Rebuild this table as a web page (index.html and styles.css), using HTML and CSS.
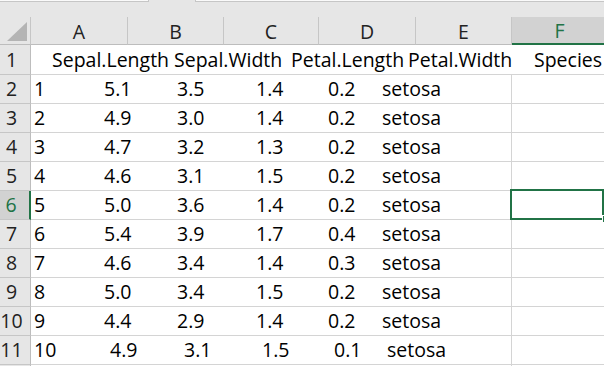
FILE: index.html
```html
<!DOCTYPE html>
<html>
<head>
<meta charset="utf-8">
<link rel="stylesheet" href="styles.css">
</head>
<body>
<div class="sheet">
  <div class="topbar"><div class="tb-left"></div><div class="tb-gap"></div><div class="tb-right"></div></div>
  <div class="colhead">
    <div class="corner"><svg width="30" height="27" viewBox="0 0 30 27"><polygon points="27,5 27,24 7,24" fill="#b4b4b4"/></svg></div>
    <div class="ch ca">A</div>
    <div class="ch cb">B</div>
    <div class="ch cc">C</div>
    <div class="ch cd">D</div>
    <div class="ch ce">E</div>
    <div class="ch cf selcol">F</div>
  </div>

  <div class="row first">
    <div class="rh">1</div>
    <div class="span hdr"><span class="h1">Sepal.Length</span><span class="h2">Sepal.Width</span><span class="h3">Petal.Length</span><span>Petal.Width</span></div>
    <div class="fc nob"><span class="spec">Species</span></div>
  </div>

  <div class="row"><div class="rh">2</div><div class="span"><span class="i">1</span><span class="v1">5.1</span><span class="v2">3.5</span><span class="v3">1.4</span><span class="v4">0.2</span><span>setosa</span></div><div class="fc"></div></div>
  <div class="row"><div class="rh">3</div><div class="span"><span class="i">2</span><span class="v1">4.9</span><span class="v2">3.0</span><span class="v3">1.4</span><span class="v4">0.2</span><span>setosa</span></div><div class="fc"></div></div>
  <div class="row"><div class="rh">4</div><div class="span"><span class="i">3</span><span class="v1">4.7</span><span class="v2">3.2</span><span class="v3">1.3</span><span class="v4">0.2</span><span>setosa</span></div><div class="fc"></div></div>
  <div class="row"><div class="rh">5</div><div class="span"><span class="i">4</span><span class="v1">4.6</span><span class="v2">3.1</span><span class="v3">1.5</span><span class="v4">0.2</span><span>setosa</span></div><div class="fc"></div></div>
  <div class="row"><div class="rh selrow">6</div><div class="span"><span class="i">5</span><span class="v1">5.0</span><span class="v2">3.6</span><span class="v3">1.4</span><span class="v4">0.2</span><span>setosa</span></div><div class="fc active"><div class="selbox"></div><div class="handle"></div></div></div>
  <div class="row"><div class="rh">7</div><div class="span"><span class="i">6</span><span class="v1">5.4</span><span class="v2">3.9</span><span class="v3">1.7</span><span class="v4">0.4</span><span>setosa</span></div><div class="fc"></div></div>
  <div class="row"><div class="rh">8</div><div class="span"><span class="i">7</span><span class="v1">4.6</span><span class="v2">3.4</span><span class="v3">1.4</span><span class="v4">0.3</span><span>setosa</span></div><div class="fc"></div></div>
  <div class="row"><div class="rh">9</div><div class="span"><span class="i">8</span><span class="v1">5.0</span><span class="v2">3.4</span><span class="v3">1.5</span><span class="v4">0.2</span><span>setosa</span></div><div class="fc"></div></div>
  <div class="row"><div class="rh">10</div><div class="span"><span class="i">9</span><span class="v1">4.4</span><span class="v2">2.9</span><span class="v3">1.4</span><span class="v4">0.2</span><span>setosa</span></div><div class="fc"></div></div>
  <div class="row"><div class="rh">11</div><div class="span last"><span class="i">10</span><span class="v1">4.9</span><span class="v2">3.1</span><span class="v3">1.5</span><span class="v4">0.1</span><span>setosa</span></div><div class="fc"></div></div>
  <div class="row tail"><div class="rh"></div><div class="span"></div><div class="fc"></div></div>
</div>
</body>
</html>
```

FILE: styles.css
```css
html, body {
  margin: 0;
  padding: 0;
  background: #ffffff;
  overflow: hidden;
}
.sheet {
  width: 604px;
  height: 366px;
  overflow: hidden;
  font-family: "Open Sans", "Liberation Sans", sans-serif;
  font-size: 19.5px;
  color: #000;
}
.topbar {
  display: flex;
  height: 17px;
  background: #e6e6e6;
}
.tb-left {
  width: 149px;
  height: 2px;
  box-sizing: border-box;
  background: #fafafa;
  border-right: 1px solid #c6c6c6;
  border-bottom: 1px solid #c6c6c6;
}
.tb-gap { width: 46px; }
.tb-right {
  flex: 1;
  height: 2px;
  box-sizing: border-box;
  background: #fafafa;
  border-left: 1px solid #c6c6c6;
  border-bottom: 1px solid #c6c6c6;
}
.colhead {
  display: flex;
  height: 28px;
  background: #e6e6e6;
}
.colhead > div {
  box-sizing: border-box;
  height: 28px;
  border-bottom: 1px solid #bdbdbd;
}
.corner {
  width: 31px;
  border-right: 1px solid #c6c6c6;
}
.corner svg { display: block; }
.ch {
  text-align: center;
  line-height: 27px;
  padding-top: 1px;
  color: #222;
  border-right: 1px solid #c6c6c6;
  flex: none;
}
.ca { width: 97px; }
.cb { width: 96px; }
.cc { width: 95px; }
.cd { width: 97px; }
.ce { width: 96px; }
.cf { width: 96px; }
.colhead .selcol {
  background: #d2d2d2;
  color: #217346;
  border-bottom: 2px solid #217346;
  line-height: 26px;
}
.row {
  display: flex;
  height: 29px;
}
.row.first { height: 30px; }
.row > div {
  box-sizing: border-box;
  height: 100%;
  border-bottom: 1px solid #d4d4d4;
  line-height: 28px;
  white-space: nowrap;
}
.row.first > div { line-height: 30px; }
.rh {
  width: 31px;
  flex: none;
  background: #e6e6e6;
  color: #222;
  text-align: center;
  padding-right: 7px;
  border-right: 1px solid #bdbdbd;
  border-bottom-color: #c6c6c6 !important;
}
.rh.selrow {
  background: #d2d2d2;
  color: #217346;
  border-right: 2px solid #217346;
}
.span {
  width: 480px;
  flex: none;
  padding-left: 3px;
}
.span span { display: inline-block; }
.span .i { width: 70px; }
.span .v1 { width: 73px; }
.span .v2 { width: 79px; }
.span .v3 { width: 72px; }
.span .v4 { width: 54px; }
.span.last .i { width: 76px; }
.span.last .v1 { width: 74px; }
.span.last .v2 { width: 78px; }
.span.last .v3 { width: 72px; }
.span.last .v4 { width: 53px; }
.span.hdr { padding-left: 21px; }
.span.hdr .h1 { width: 122px; }
.span.hdr .h2 { width: 117px; }
.span.hdr .h3 { width: 117px; }
.fc {
  width: 96px;
  flex: none;
  border-left: 1px solid #d4d4d4;
  position: relative;
}
.fc.nob { border-left: none; }
.spec { padding-left: 23px; }
.selbox {
  position: absolute;
  left: -2px;
  top: -2px;
  width: 94px;
  height: 31px;
  box-sizing: border-box;
  border: 2px solid #217346;
}
.handle {
  position: absolute;
  left: 90px;
  top: 24px;
  width: 6px;
  height: 6px;
  background: #217346;
  border-left: 1px solid #fff;
  border-top: 1px solid #fff;
}
.row.tail .span, .row.tail .fc { border-bottom: none; }
```
